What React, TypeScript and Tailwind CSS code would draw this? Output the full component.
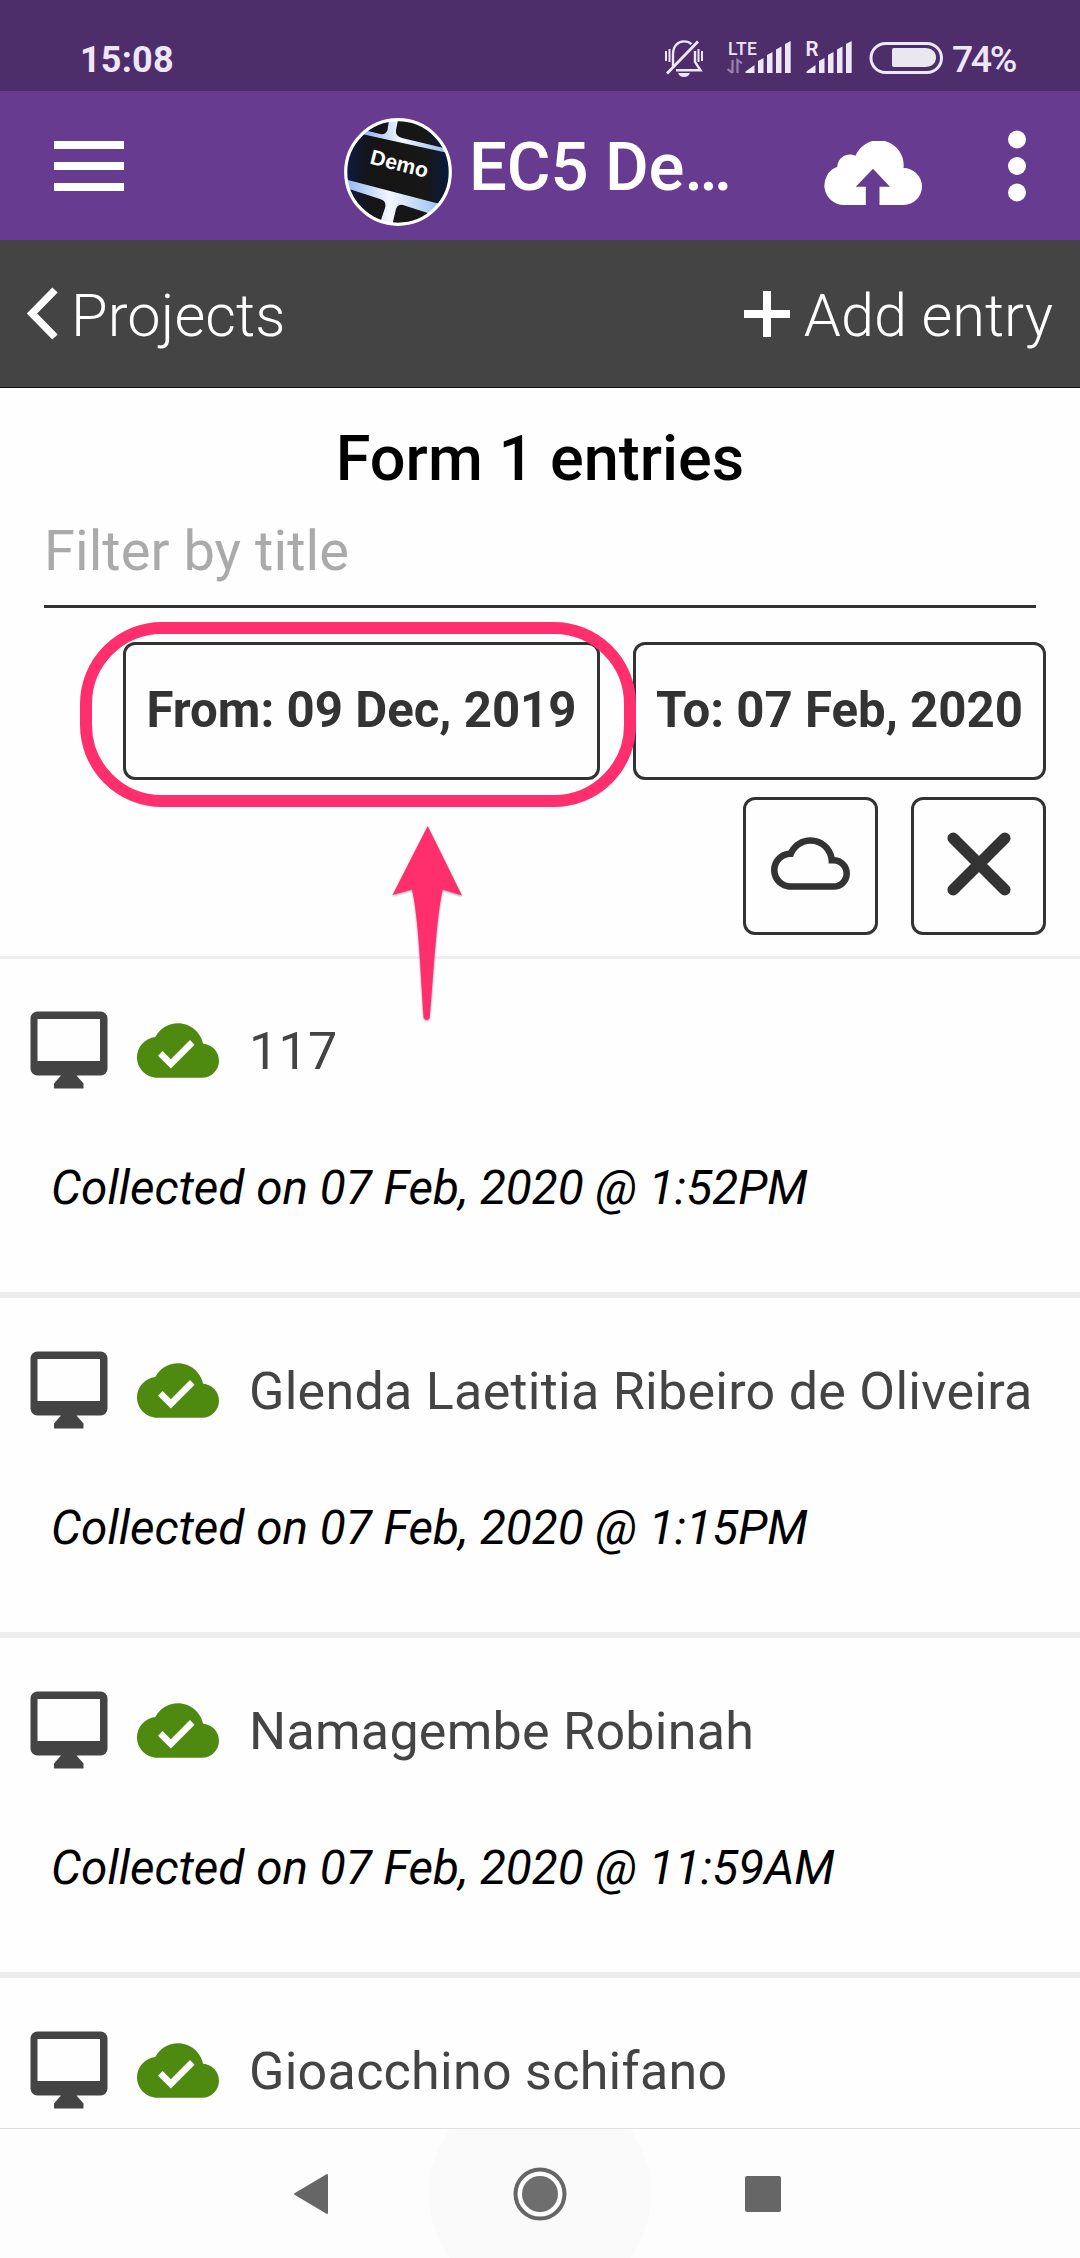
import React from "react";

const entries = [
  { title: "117", date: "Collected on 07 Feb, 2020 @ 1:52PM" },
  { title: "Glenda Laetitia Ribeiro de Oliveira", date: "Collected on 07 Feb, 2020 @ 1:15PM" },
  { title: "Namagembe Robinah", date: "Collected on 07 Feb, 2020 @ 11:59AM" },
  { title: "Gioacchino schifano", date: "" },
];

function MutedBell() {
  return (
    <svg width="38" height="38" viewBox="0 0 38 38" fill="none" stroke="#efe6fa" strokeWidth="2.4">
      <path d="M8 26V14C8 6 13 1.400 19 1.400c3 0 5.600 1 7.500 2.800M30 11v11l5.500 8.300H11" />
      <path d="M2 33.500 33 1.500" strokeWidth="2.800" />
      <path d="M1 11v10M4.500 9v13M33.500 9v13M37 11v10" strokeWidth="2" />
      <path d="M13 33h12c-1 2.500-3 4-6 4s-5-1.500-6-4z" fill="#efe6fa" stroke="none" />
    </svg>
  );
}

function SignalBars() {
  return (
    <g fill="#efe6fa">
      <path d="M0 32v-1.500L9 24v8z" />
      <path d="M12.500 32V20l5.500-3v15z" />
      <path d="M21.500 32V14l5.500-3v21z" />
      <path d="M30.500 32V8.500L36 5.500V32z" />
      <path d="M39.500 32V3L45.200 0v32z" />
    </g>
  );
}

function StatusBar() {
  return (
    <div className="flex h-[91px] items-start bg-[#4e2d6b] pl-[80px] text-[#efe6fa]">
      <span className="mt-[39px] w-[585px] text-[36px] font-bold leading-[42px] tracking-[0.2px]">15:08</span>
      <div className="mt-[40px] flex items-start">
        <MutedBell />
        <svg className="-mt-[10px] ml-[24px]" width="66" height="46" viewBox="0 -10 66 46">
          <text x="1" y="14.500" fontSize="17.500" fontWeight="500" fill="#efe6fa" textLength="29">LTE</text>
          <path d="M5.500 20v13M5.500 33l-5-4M10.500 33V20l4.500 3.500" stroke="#9a82b0" strokeWidth="2.200" fill="none" />
          <g transform="translate(18.500 1)"><SignalBars /></g>
        </svg>
        <svg className="-mt-[10px] ml-[9px]" width="54" height="46" viewBox="-4 -10 54 46">
          <text x="-.5" y="15.500" fontSize="20.500" fontWeight="600" fill="#efe6fa">R</text>
          <g transform="translate(.5 1)"><SignalBars /></g>
        </svg>
        <svg className="mt-[1px] ml-[13px]" width="76" height="34" viewBox="0 0 76 34">
          <rect x="2" y="2.500" width="70.500" height="29" rx="14.500" fill="none" stroke="#efe6fa" strokeWidth="3" />
          <path d="M25 7h31c7 0 11 4 11 9.500S63 26 56 26H25q-2 0-2-2V9q0-2 2-2z" fill="#ebe7f0" />
        </svg>
        <span className="-mt-[3px] ml-[7px] text-[37.500px] font-medium leading-[44px] tracking-[-2.500px]">74%</span>
      </div>
    </div>
  );
}

function ProjectLogo() {
  return (
    <svg width="108" height="108" viewBox="0 0 108 108">
      <defs>
        <clipPath id="disc"><circle cx="54" cy="54" r="52" /></clipPath>
        <linearGradient id="keys" x1="0" x2="1">
          <stop offset="0" stopColor="#0c1b42" />
          <stop offset=".25" stopColor="#151515" />
          <stop offset=".75" stopColor="#171717" />
          <stop offset="1" stopColor="#081940" />
        </linearGradient>
        <linearGradient id="glow" x1="0" x2="1">
          <stop offset="0" stopColor="#8cb4f2" />
          <stop offset=".45" stopColor="#f3f7ff" />
          <stop offset="1" stopColor="#8fb9f0" />
        </linearGradient>
      </defs>
      <g clipPath="url(#disc)">
        <rect width="108" height="108" fill="url(#keys)" />
        <path d="M20 12 36 16q6 1 7.500-4L45 2h9l-2 10q-1 6 6 8l46 11v4L20 16.500z" fill="url(#glow)" />
        <path d="M0 61 92 85l10 1-9 12-34-11q-5-1-7 4l-4 17H35l6-18q2-7-5-9L2 70z" fill="url(#glow)" />
      </g>
      <text transform="translate(25 45.500) rotate(14)" fontSize="21" fontWeight="700" fill="#fff" textLength="59" lengthAdjust="spacingAndGlyphs" fontFamily="Liberation Sans, sans-serif">Demo</text>
      <circle cx="54" cy="54" r="52.300" fill="none" stroke="#fff" strokeWidth="3.200" />
    </svg>
  );
}

function Header() {
  return (
    <header className="flex h-[149px] items-start bg-[#673c90] pl-[54px] text-white">
      <div className="mt-[50px] flex w-[70px] flex-col gap-[13px]">
        <div className="h-[8px] bg-white" />
        <div className="h-[8px] bg-white" />
        <div className="h-[8px] bg-white" />
      </div>
      <div className="mt-[27px] ml-[220px]"><ProjectLogo /></div>
      <h1 className="mt-[36px] ml-[17px] w-[355px] text-[67px] font-medium leading-[80px] tracking-[-0.100px]">EC5 De…</h1>
      <svg className="mt-[50px]" width="98" height="64" viewBox="0 0 98 64">
        <path fill="#fff" d="M19.700 64A19.700 19.700 0 0 1 13.300 25.800 12.500 12.500 0 0 1 31.500 14.800 25 25 0 0 1 79.500 27 18.500 18.500 0 0 1 79.500 64H55.500V45.700H66L49 27.700 31.800 45.700h10V64z" />
      </svg>
      <svg className="mt-[39px] ml-[86px]" width="18" height="74" viewBox="0 0 18 74" fill="#fff">
        <circle cx="9" cy="9.500" r="9" /><circle cx="9" cy="36" r="9" /><circle cx="9" cy="62.500" r="9" />
      </svg>
    </header>
  );
}

function Toolbar() {
  return (
    <nav className="flex h-[148px] justify-between border-b border-[#111] bg-[#444] pr-[27px] pl-[26px] text-white">
      <div className="flex items-start">
        <svg className="mt-[47px]" width="32" height="54" viewBox="0 0 32 54">
          <path d="M29 3 6 26.500 29 50" fill="none" stroke="#fff" strokeWidth="7.500" />
        </svg>
        <span className="mt-[40px] ml-[13px] text-[59.500px] font-light leading-[72px] tracking-[0.100px]">Projects</span>
      </div>
      <div className="flex items-start">
        <svg className="mt-[51px]" width="46" height="46" viewBox="0 0 46 46">
          <path d="M0 23h46M23 0v46" stroke="#fff" strokeWidth="8" />
        </svg>
        <span className="mt-[40px] ml-[14px] text-[59.500px] font-light leading-[72px]">Add entry</span>
      </div>
    </nav>
  );
}

function Filters() {
  return (
    <section className="relative z-10 flex h-[571px] flex-col border-b-[3px] border-[#eee]">
      <h2 className="mt-[31px] text-center text-[63px] font-medium leading-[80px] text-black">Form 1 entries</h2>
      <div className="mx-[44px] mt-[11px] h-[98px] border-b-[3px] border-[#333] text-[56px] leading-[82px] tracking-[0.050px] text-[#aaa]">Filter by title</div>
      <div className="mt-[34px] mr-[34px] flex justify-end gap-[33px] text-[49.200px] font-bold text-[#333]">
        <div className="flex h-[138px] w-[477px] items-center justify-center whitespace-nowrap rounded-[12px] border-[3px] border-[#333]">From: 09 Dec, 2019</div>
        <div className="flex h-[138px] w-[413px] items-center justify-center whitespace-nowrap rounded-[12px] border-[3px] border-[#333]">To: 07 Feb, 2020</div>
      </div>
      <div className="mt-[17px] mr-[34px] flex justify-end gap-[33px]">
        <div className="flex h-[138px] w-[135px] items-center justify-center rounded-[12px] border-[3px] border-[#333]">
          <svg className="-mt-[6px] mr-[1px]" width="79" height="53" viewBox="0 4 24 16">
            <path fill="#333" d="M19.350 10.040C18.670 6.590 15.640 4 12 4 9.110 4 6.600 5.640 5.350 8.040 2.340 8.360 0 10.910 0 14c0 3.310 2.690 6 6 6h13c2.760 0 5-2.240 5-5 0-2.640-2.050-4.780-4.650-4.960zM19 18H6c-2.210 0-4-1.790-4-4s1.790-4 4-4h.710C7.370 7.690 9.480 6 12 6c3.040 0 5.500 2.460 5.500 5.500v.5H19c1.660 0 3 1.340 3 3s-1.340 3-3 3z" />
          </svg>
        </div>
        <div className="flex h-[138px] w-[135px] items-center justify-center rounded-[12px] border-[3px] border-[#333]">
          <svg className="-mt-[5px]" width="64" height="64" viewBox="0 0 64 64">
            <path d="M6.200 6.200 57.800 57.800M57.800 6.200 6.200 57.800" stroke="#333" strokeWidth="11.500" strokeLinecap="round" />
          </svg>
        </div>
      </div>
      <div className="absolute top-[234px] left-[80px] h-[185px] w-[556px] rounded-[82px] border-[12px] border-[#ff2f6e]" />
      <svg className="absolute top-[436px] left-[390px] drop-shadow-[0_1px_1px_rgba(0,0,0,0.4)]" width="76" height="202" viewBox="0 0 76 202">
        <path fill="#ff2f6e" d="M37.700 2 72 71.500 52.700 65.500C46 95 43 160 39.700 194q-3 4-6 0C31 160 29 95 22 65.500L2.500 71z" />
      </svg>
    </section>
  );
}

function EntryRow({ title, date }: { title: string; date: string }) {
  return (
    <li className="h-[340px] border-b-[6px] border-[#eee]">
      <div className="flex h-[131px] items-start pl-[30px]">
        <svg className="mt-[53px]" width="78" height="78" viewBox="0 0 78 78" fill="#444">
          <path fillRule="evenodd" d="M7.500.5h63a7 7 0 0 1 7 7v50a7 7 0 0 1-7 7H46.500l7 8v5H24v-5l7-8H7.500a7 7 0 0 1-7-7v-50a7 7 0 0 1 7-7zM7.500 8v42h62.500V8z" />
        </svg>
        <svg className="mt-[65px] ml-[29px]" width="82" height="55" viewBox="0 4 24 16">
          <path fill="#4f8a10" d="M19.350 10.040C18.670 6.590 15.640 4 12 4 9.110 4 6.600 5.640 5.350 8.040 2.340 8.360 0 10.910 0 14c0 3.310 2.690 6 6 6h13c2.760 0 5-2.240 5-5 0-2.640-2.050-4.780-4.650-4.960zM9.900 17.300 6.150 13.500l1.350-1.350 2.400 2.400 5.600-5.650 1.350 1.400z" />
        </svg>
        <span className="mt-[64px] ml-[30px] whitespace-nowrap text-[52px] leading-[60px] tracking-[0.280px] text-[#444]">{title}</span>
      </div>
      <p className="mt-[69px] pl-[51px] text-[47.700px] italic leading-[60px] text-black">{date}</p>
    </li>
  );
}

function NavigationBar() {
  return (
    <footer className="flex h-[130px] items-center justify-center overflow-hidden border-t border-[#e0e0e0] bg-[#fdfdfd]">
      <svg className="mr-[100px]" width="36" height="42" viewBox="0 0 36 42">
        <path d="M34 2v38L2 21z" fill="#666" stroke="#666" strokeWidth="2" strokeLinejoin="round" />
      </svg>
      <div className="flex h-[222px] w-[222px] shrink-0 items-center justify-center rounded-full bg-[#fafafa]">
        <svg width="54" height="54" viewBox="0 0 54 54">
          <circle cx="27" cy="27" r="24.500" fill="#fff" stroke="#666" strokeWidth="4" />
          <circle cx="27" cy="27" r="18" fill="#6e6e6e" />
        </svg>
      </div>
      <div className="mr-[6px] ml-[94px] h-[36px] w-[36px] rounded-[2px] bg-[#666]" />
    </footer>
  );
}

export default function App() {
  return (
    <div className="flex h-[2258px] w-[1080px] flex-col overflow-hidden bg-[#fefefe] font-['Roboto',sans-serif]">
      <StatusBar />
      <Header />
      <Toolbar />
      <Filters />
      <ul className="-mt-px h-[1170px] shrink-0 overflow-hidden">
        {entries.map((entry) => (
          <EntryRow key={entry.title} title={entry.title} date={entry.date} />
        ))}
      </ul>
      <NavigationBar />
    </div>
  );
}
